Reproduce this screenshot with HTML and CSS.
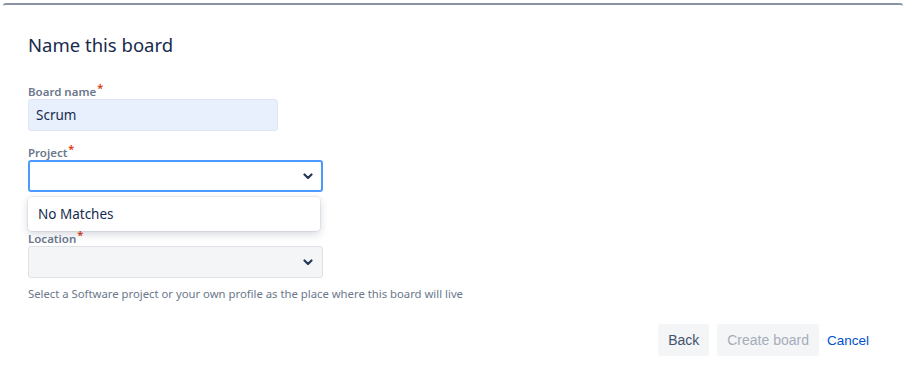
FILE: index.html
```html
<!DOCTYPE html>
<html>
<head>
    <title>Name this board</title>
    <link rel="stylesheet" href="styles.css">
</head>
<body>
    <div class="dialog">
        <h2 class="dialog-title">Name this board</h2>

        <div class="field">
            <label class="field-label">Board name<span class="req">*</span></label>
            <div class="text-input">Scrum</div>
        </div>

        <div class="field field-project">
            <label class="field-label">Project<span class="req">*</span></label>
            <div class="select select-focus">
                <svg class="chevron" width="10" height="7" viewBox="0 0 10 7"><path d="M1.5 1.5 L5 5 L8.5 1.5" fill="none" stroke="#253858" stroke-width="2.2" stroke-linecap="round" stroke-linejoin="round"/></svg>
            </div>
            <div class="menu">No Matches</div>
        </div>

        <div class="field field-location">
            <label class="field-label">Location<span class="req">*</span></label>
            <div class="select select-disabled">
                <svg class="chevron" width="10" height="7" viewBox="0 0 10 7"><path d="M1.5 1.5 L5 5 L8.5 1.5" fill="none" stroke="#253858" stroke-width="2.2" stroke-linecap="round" stroke-linejoin="round"/></svg>
            </div>
            <p class="helper">Select a Software project or your own profile as the place where this board will live</p>
        </div>

        <div class="actions">
            <button class="btn btn-back">Back</button>
            <button class="btn btn-create">Create board</button>
            <a class="btn-link" href="#">Cancel</a>
        </div>
    </div>
</body>
</html>
```

FILE: styles.css
```css
body {
    margin: 0;
    background: #ffffff;
    font-family: "Noto Sans", "Open Sans", sans-serif;
    color: #172b4d;
}

.dialog {
    width: 900px;
    margin: 3px 0 0 3px;
    border-top: 2px solid #8993a4;
    border-radius: 3px 3px 0 0;
    padding: 28px 0 0 25px;
    box-sizing: border-box;
}

.dialog-title {
    margin: 0 0 27px 0;
    font-size: 18.5px;
    font-weight: 400;
    line-height: 24px;
    color: #172b4d;
}

.field {
    position: relative;
    display: flex;
    flex-direction: column;
}

.field-label {
    font-size: 11.5px;
    font-weight: 600;
    line-height: 15px;
    color: #6b778c;
}

.req {
    color: #de350b;
    font-size: 11px;
    position: relative;
    top: -4px;
    margin-left: 1px;
}

.text-input {
    width: 250px;
    height: 32px;
    box-sizing: border-box;
    background: #e8f0fe;
    border: 1px solid #dfe6f2;
    border-radius: 3px;
    padding: 6px 7px;
    font-size: 13.5px;
    line-height: 18px;
    color: #172b4d;
}

.field-project {
    margin-top: 14px;
}

.select {
    width: 295px;
    height: 32px;
    box-sizing: border-box;
    border-radius: 3px;
    display: flex;
    align-items: center;
    justify-content: flex-end;
    padding-right: 8px;
}

.select-focus {
    border: 2px solid #4c9aff;
    background: #ffffff;
}

.select-disabled {
    border: 1px solid #dfe1e6;
    background: #f4f5f7;
    padding-right: 9px;
}

.chevron {
    display: block;
}

.menu {
    position: absolute;
    top: 52px;
    left: 0;
    width: 292px;
    height: 34px;
    box-sizing: border-box;
    background: #ffffff;
    border-radius: 4px;
    box-shadow: 0 0 0 1px rgba(9, 30, 66, 0.06), 0 3px 8px rgba(9, 30, 66, 0.18);
    padding: 8px 10px;
    font-size: 13.5px;
    line-height: 18px;
    color: #172b4d;
    z-index: 2;
}

.field-location {
    margin-top: 39px;
}

.helper {
    margin: 8px 0 0 0;
    font-size: 11.3px;
    line-height: 16px;
    color: #6b778c;
}

.actions {
    display: flex;
    justify-content: flex-end;
    align-items: center;
    gap: 8px;
    margin-top: 22px;
    padding-right: 34px;
}

.btn {
    height: 32px;
    border: none;
    border-radius: 3px;
    background: #f4f5f7;
    font-family: "Liberation Sans", Arial, sans-serif;
    font-size: 14px;
    padding: 0 10px;
}

.btn-back {
    color: #42526e;
}

.btn-create {
    color: #a5adba;
}

.btn-link {
    font-family: "Liberation Sans", Arial, sans-serif;
    font-size: 13.5px;
    color: #0052cc;
    text-decoration: none;
}
```
